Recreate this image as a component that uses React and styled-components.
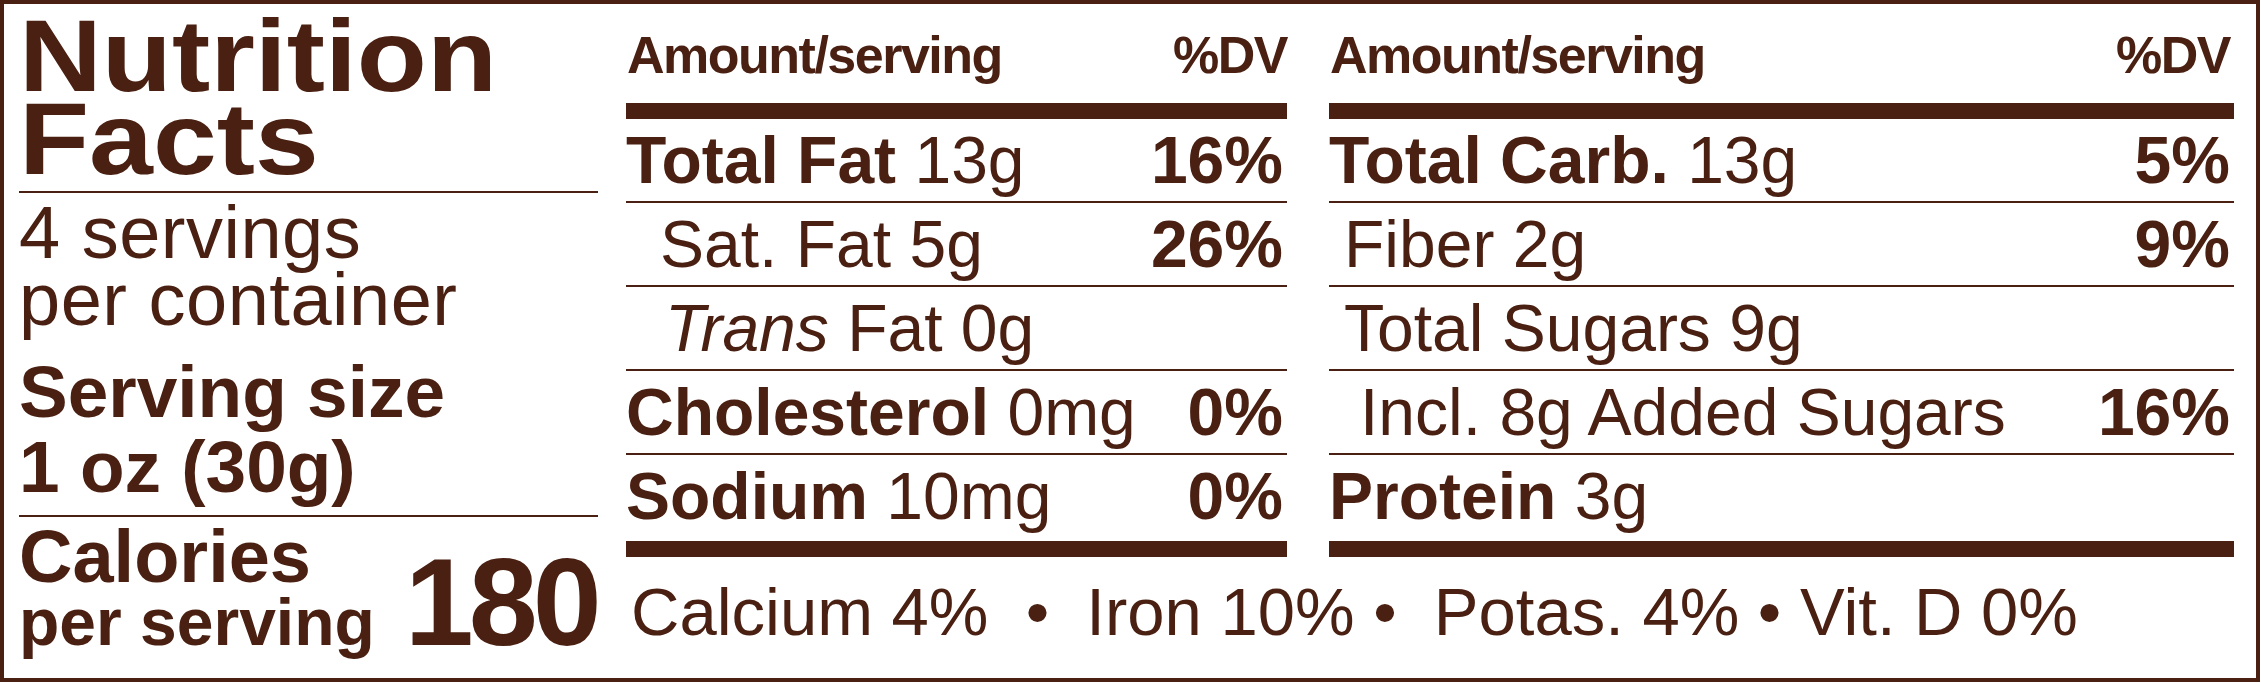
import React from 'react';
import styled, { createGlobalStyle } from 'styled-components';

const ink = '#4a2012';

const GlobalStyle = createGlobalStyle`
    html, body { margin:0; padding:0; background:#fff; }
    body {
        font-family: 'Liberation Sans', Arial, Helvetica, sans-serif;
        color:${ink};
    }
`;

const Label = styled.div`
    box-sizing:border-box;
    width:2260px;
    height:682px;
    border:4px solid ${ink};
    padding:0 22px 0 15px;
    display:flex;
    gap:28px;
    background:#fff;
`;

const Side = styled.div`
    width:579px;
    flex:none;
    display:flex;
    flex-direction:column;
`;

// the label's heading face is a wide grotesque, so stretch Liberation Sans to fit
const Title = styled.h1`
    margin:0 0 10px;
    padding-top:11px;
    font-size:102px;
    line-height:83px;
    font-weight:700;
    transform:scaleX(1.125);
    transform-origin:left top;
`;

const Rule = styled.div`
    height:2px;
    background:${ink};
    flex:none;
`;

const Servings = styled.div`
    padding-top:6px;
    font-size:74px;
    line-height:67px;
    letter-spacing:0.5px;
`;

const ServingSize = styled.div`
    margin:21px 0 11px;
    font-size:73px;
    line-height:75px;
    font-weight:700;
`;

const CalRow = styled.div`
    padding-top:9px;
    display:flex;
    align-items:last baseline;
    gap:30px;
    font-weight:700;
`;

const CalText = styled.div`
    display:flex;
    flex-direction:column;
`;

const CalWord = styled.span`
    font-size:${p => p.$size}px;
    line-height:${p => p.$lh}px;
`;

const CalNum = styled.span`
    font-size:124px;
    line-height:124px;
    letter-spacing:-5px;
`;

const Main = styled.div`
    flex:1;
    display:flex;
    flex-direction:column;
`;

const Tables = styled.div`
    display:flex;
    gap:42px;
`;

const Table = styled.div`
    width:${p => p.$w}px;
    flex:none;
`;

const Head = styled.div`
    box-sizing:border-box;
    height:99px;
    padding:25px ${p => p.$pad}px 0 1px;
    display:flex;
    justify-content:space-between;
    font-size:52px;
    line-height:52px;
    font-weight:700;
    letter-spacing:-1.5px;
`;

const Bar = styled.div`
    height:16px;
    background:${ink};
`;

const Row = styled.div`
    box-sizing:border-box;
    height:${p => (p.$last ? 86 : 84)}px;
    border-bottom:${p => (p.$last ? 'none' : `2px solid ${ink}`)};
    padding:0 4px 0 ${p => p.$indent || 0}px;
    display:flex;
    justify-content:space-between;
    font-size:66px;
    line-height:82px;
    white-space:nowrap;
`;

const B = styled.b`
    font-weight:700;
`;

const Em = styled.i`
    font-style:italic;
`;

const Foot = styled.div`
    padding:21px 0 0 5px;
    font-size:67px;
    line-height:67px;
    white-space:pre;
`;

const left = [
    { name: <B>Total Fat</B>, amt: '13g', dv: '16%' },
    { name: 'Sat. Fat', amt: '5g', dv: '26%', indent: 34 },
    { name: <Em>Trans</Em>, amt: 'Fat 0g', indent: 39 },
    { name: <B>Cholesterol</B>, amt: '0mg', dv: '0%' },
    { name: <B>Sodium</B>, amt: '10mg', dv: '0%' },
];

const right = [
    { name: <B>Total Carb.</B>, amt: '13g', dv: '5%' },
    { name: 'Fiber', amt: '2g', dv: '9%', indent: 15 },
    { name: 'Total Sugars', amt: '9g', indent: 15 },
    { name: 'Incl. 8g Added', amt: 'Sugars', dv: '16%', indent: 31 },
    { name: <B>Protein</B>, amt: '3g' },
];

const Facts = ({ rows, w, pad }) => (
    <Table $w={w}>
        <Head $pad={pad}>
            <span>Amount/serving</span>
            <span>%DV</span>
        </Head>
        <Bar />
        {rows.map((r, i) => (
            <Row key={i} $indent={r.indent} $last={i === rows.length - 1}>
                <span>{r.name} {r.amt}</span>
                {r.dv && <B>{r.dv}</B>}
            </Row>
        ))}
        <Bar />
    </Table>
);

export default function App() {
    return (
        <>
            <GlobalStyle />
            <Label>
                <Side>
                    <Title>Nutrition<br />Facts</Title>
                    <Rule />
                    <Servings>4 servings<br />per container</Servings>
                    <ServingSize>Serving size<br />1 oz (30g)</ServingSize>
                    <Rule />
                    <CalRow>
                        <CalText>
                            <CalWord $size={74} $lh={62}>Calories</CalWord>
                            <CalWord $size={66} $lh={68}>per serving</CalWord>
                        </CalText>
                        <CalNum>180</CalNum>
                    </CalRow>
                </Side>
                <Main>
                    <Tables>
                        <Facts rows={left} w={661} pad={0} />
                        <Facts rows={right} w={905} pad={4} />
                    </Tables>
                    <Foot>{'Calcium 4%  •  Iron 10% •  Potas. 4% • Vit. D 0%'}</Foot>
                </Main>
            </Label>
        </>
    );
}
